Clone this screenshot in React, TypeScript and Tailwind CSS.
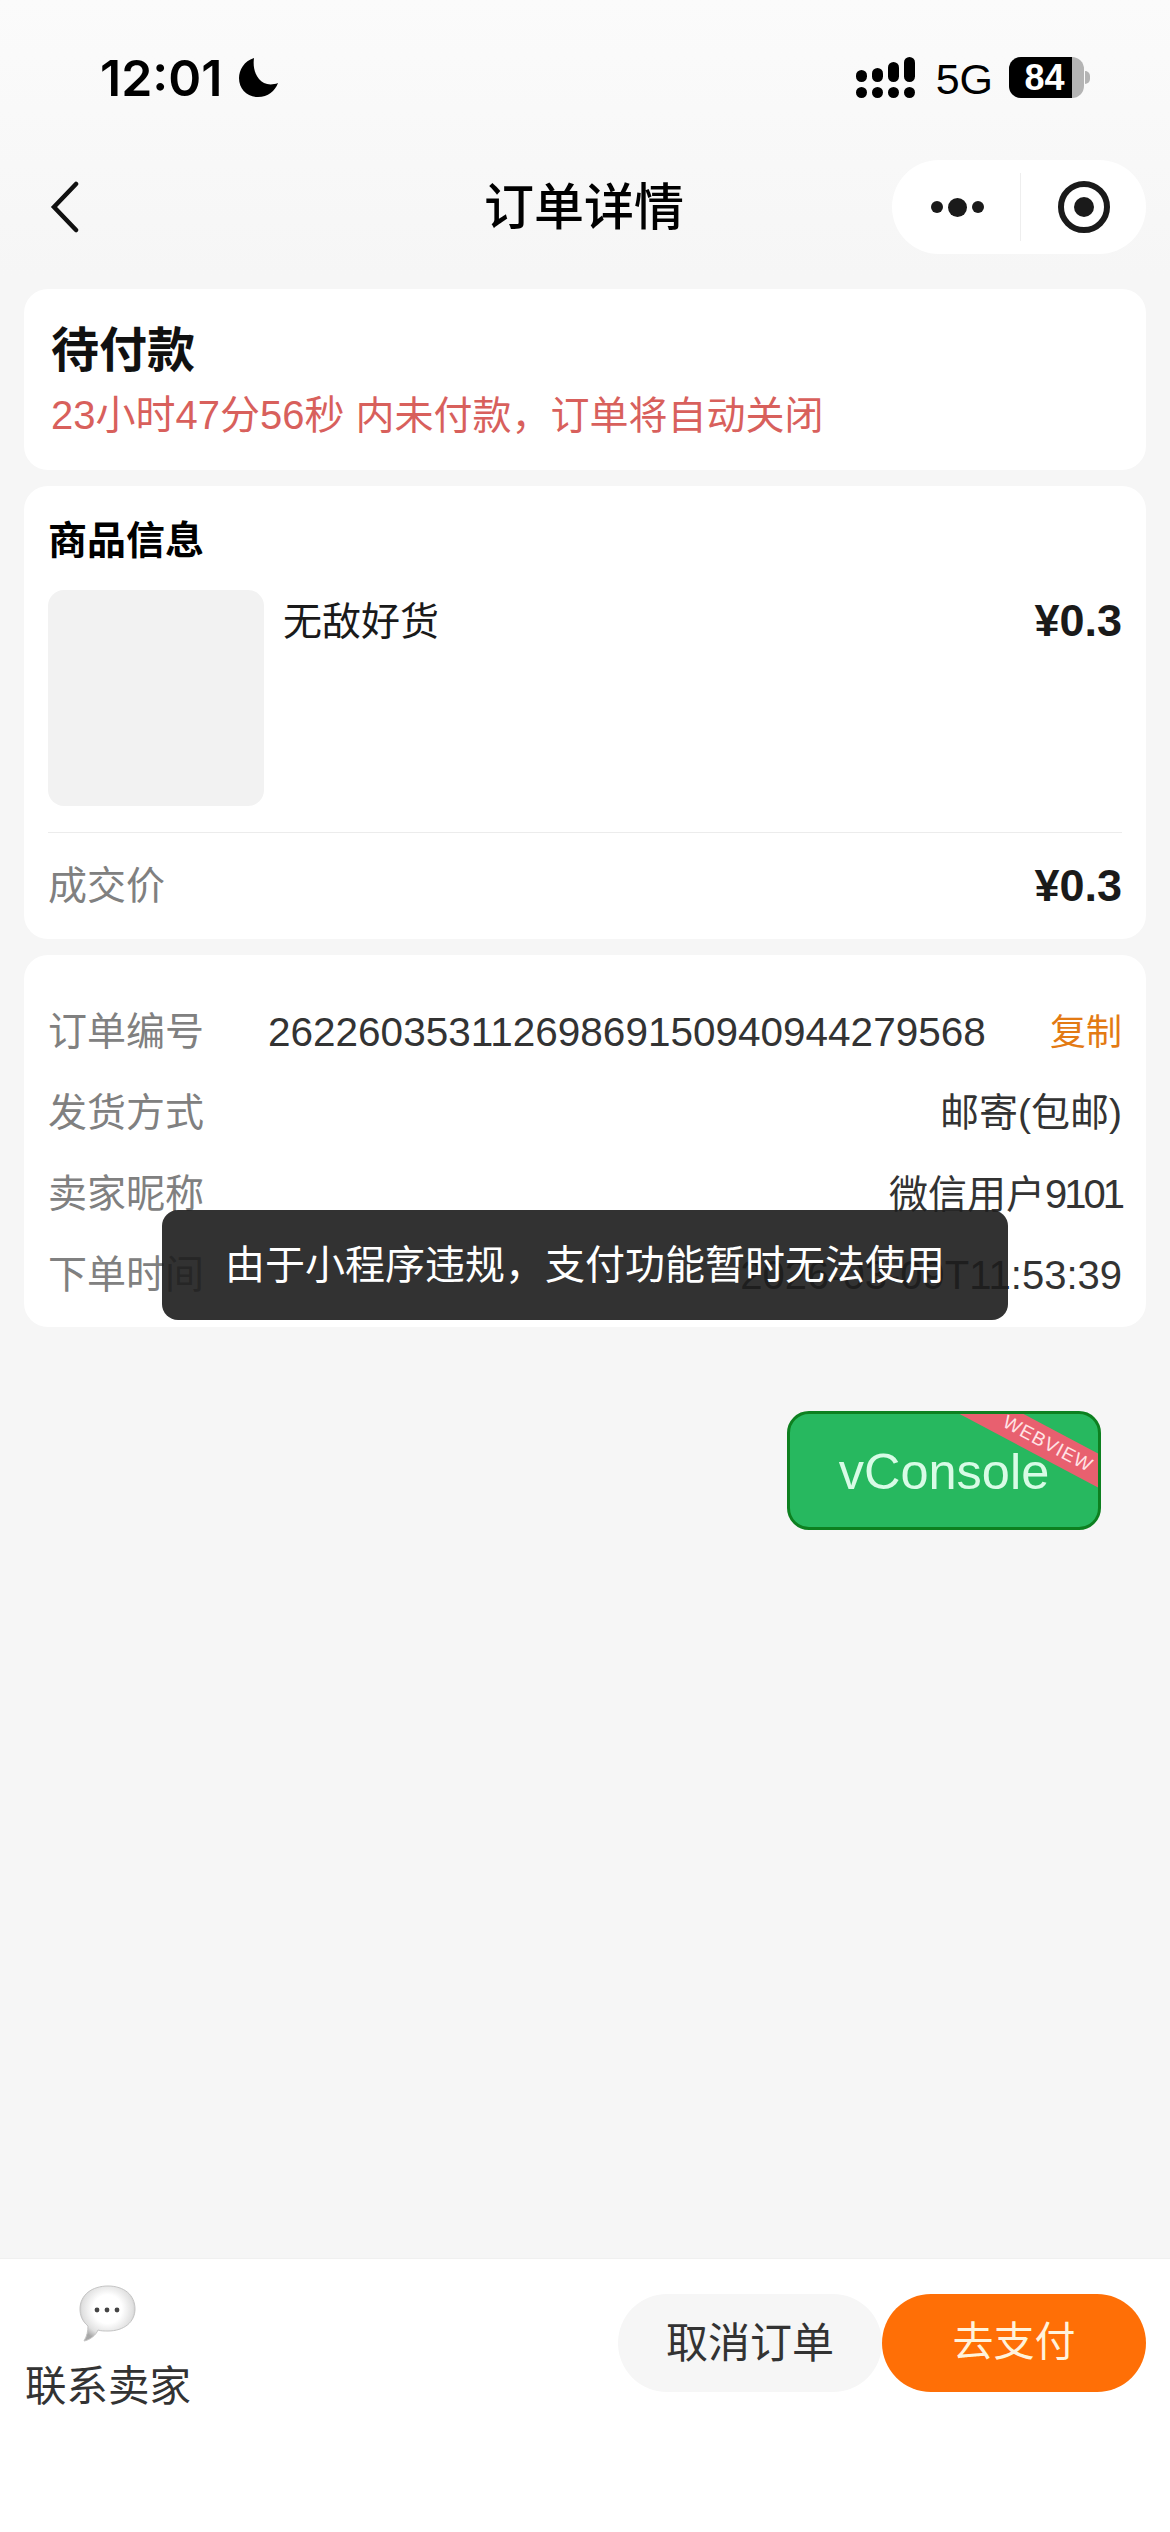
import React from "react";

const sans = "font-['Liberation_Sans','Noto_Sans_CJK_SC',sans-serif]";

function Signal() {
  const tops = ["h-[12px]", "h-[14px]", "h-[20px]", "h-[25px]"];
  return (
    <div className="flex gap-[5px] items-end">
      {tops.map((h, i) => (
        <div key={i} className="flex flex-col items-center gap-[5px] justify-end">
          <div className={`w-[11px] rounded-full bg-black ${h}`} />
          <div className="w-[11px] h-[11px] rounded-full bg-black" />
        </div>
      ))}
    </div>
  );
}

function Battery() {
  return (
    <div className="flex items-center">
      <div className="w-[75px] h-[41px] rounded-[12px] bg-[#b4b4b4] overflow-hidden">
        <div className="w-[63px] h-[41px] bg-black flex items-center justify-center text-white text-[36px] font-bold leading-none pl-[8px]">
          84
        </div>
      </div>
      <div className="w-[5px] h-[13px] rounded-r-full bg-[#b4b4b4] ml-[1px]" />
    </div>
  );
}

function Row({ label, children }: { label: string; children: React.ReactNode }) {
  return (
    <div className="h-[81px] flex items-center justify-between">
      <span className="text-[#808080] text-[39px]">{label}</span>
      <span className="text-[#333333] text-[39px]">{children}</span>
    </div>
  );
}

export default function App() {
  return (
    <div className={`relative w-[1170px] h-[2532px] bg-[#f6f6f6] flex flex-col overflow-hidden ${sans}`}>
      <header className="bg-gradient-to-b from-[#fbfbfb] to-[#f6f6f6] h-[277px] shrink-0">
        <div className="h-[160px] pt-[53px] flex justify-between pl-[100px] pr-[80px]">
          <div className="flex items-start gap-[17px]">
            <span className="font-['Inter',sans-serif] text-[50px] font-semibold leading-[50px] text-black tracking-[0px]">12:01</span>
            <svg width="39" height="39" viewBox="0 0 39 39" className="mt-[5px]">
              <path d="M15 0 C5 3 0 12 0 20 C0 31 8 39 19 39 C29 39 36 33 39 25 C31 28 24 26 20 21 C15 15 14 7 15 0 Z" fill="#000" />
            </svg>
          </div>
          <div className="flex items-start">
            <div className="mt-[4px]"><Signal /></div>
            <span className="ml-[21px] mt-[6px] text-[43px] leading-[40px] text-black">5G</span>
            <div className="ml-[16px] mt-[4px]"><Battery /></div>
          </div>
        </div>
        <div className="relative h-[94px] flex items-center justify-between pl-[44px] pr-[24px]">
          <svg width="40" height="52" viewBox="0 0 40 52" fill="none">
            <path d="M32 3 L10 26 L32 49" stroke="#111" strokeWidth="4.5" strokeLinecap="round" strokeLinejoin="miter" />
          </svg>
          <h1 className="absolute left-[484px] top-[23px] text-[50px] font-medium text-black leading-none">订单详情</h1>
          <div className="w-[254px] h-[94px] rounded-full bg-white flex items-center">
            <div className="w-[128px] flex items-center justify-center gap-[5px] pl-[2px]">
              <span className="w-[12px] h-[12px] rounded-full bg-[#1a1a1a]" />
              <span className="w-[19px] h-[19px] rounded-full bg-[#1a1a1a]" />
              <span className="w-[12px] h-[12px] rounded-full bg-[#1a1a1a]" />
            </div>
            <div className="w-px h-[68px] bg-[#eeeeee]" />
            <div className="flex-1 flex items-center justify-center">
              <div className="w-[52px] h-[52px] rounded-full border-[6px] border-[#1a1a1a] flex items-center justify-center">
                <div className="w-[20px] h-[20px] rounded-full bg-[#1a1a1a]" />
              </div>
            </div>
          </div>
        </div>
      </header>

      <main className="flex-1 pt-[12px] px-[24px] flex flex-col gap-[16px]">
        <section className="bg-white rounded-[24px] h-[181px] pl-[27px] pt-[32px]">
          <div className="text-[48px] font-bold leading-[60px] text-[#111111]">待付款</div>
          <div className="leading-[50px] mt-[9px] text-[#d8605c] text-[40px]">
            23小时47分56秒 <span className="text-[39px]">内未付款，订单将自动关闭</span>
          </div>
        </section>

        <section className="bg-white rounded-[24px] h-[453px] px-[24px] pt-[30px]">
          <div className="text-[39px] font-bold leading-[50px] text-black">商品信息</div>
          <div className="flex mt-[24px] h-[216px]">
            <div className="w-[216px] h-[216px] rounded-[16px] bg-[#f2f2f2]" />
            <div className="ml-[19px] text-[39px] leading-[50px] text-[#1a1a1a] flex-1 mt-[7px]">无敌好货</div>
            <div className="text-[45px] font-bold leading-[50px] text-[#1a1a1a] mt-[6px]">¥0.3</div>
          </div>
          <div className="h-px bg-[#ececec] mt-[26px]" />
          <div className="flex items-center justify-between h-[106px]">
            <span className="text-[39px] text-[#808080]">成交价</span>
            <span className="text-[45px] font-bold text-[#1a1a1a]">¥0.3</span>
          </div>
        </section>

        <section className="bg-white rounded-[24px] h-[372px] px-[24px] pt-[37px]">
          <div className="h-[81px] flex items-center">
            <span className="text-[#808080] text-[39px] w-[220px]">订单编号</span>
            <span className="text-[#333333] text-[40.5px] flex-1">26226035311269869150940944279568</span>
            <span className="text-[#e37a13] text-[36px]">复制</span>
          </div>
          <Row label="发货方式">邮寄(包邮)</Row>
          <Row label="卖家昵称">
            微信用户<span className="text-[40px] tracking-[-3px]">9101</span>
          </Row>
          <Row label="下单时间"><span className="text-[40px]">2026-03-09T11:53:39</span></Row>
        </section>
      </main>

      <footer className="bg-white h-[274px] shrink-0 border-t border-[#f0f0f0] flex items-start justify-between pl-[25px] pr-[24px] relative">
        <div className="flex flex-col items-center pt-[26px]">
          <svg width="60" height="58" viewBox="0 0 60 58">
            <defs>
              <radialGradient id="bub" cx="50%" cy="42%" r="58%">
                <stop offset="45%" stopColor="#ffffff" />
                <stop offset="80%" stopColor="#e0e0e0" />
                <stop offset="100%" stopColor="#a8a8a8" />
              </radialGradient>
            </defs>
            <path d="M30 1 C46 1 57 10 57 24 C57 37 46 46 30 46 C26 46 23 46 20 45 C18 50 12 55 6 56 C9 51 10 46 10 41 C4 36 2 30 2 24 C2 10 14 1 30 1 Z" fill="url(#bub)" stroke="#c4c4c4" strokeWidth="1" />
            <circle cx="19" cy="25" r="2.4" fill="#444" />
            <circle cx="29" cy="25" r="2.4" fill="#444" />
            <circle cx="39" cy="25" r="2.4" fill="#444" />
          </svg>
          <span className="text-[41.5px] leading-[50px] text-[#333333] mt-[19px]">联系卖家</span>
        </div>
        <div className="flex items-center pt-[35px]">
          <button className="w-[264px] h-[98px] rounded-full bg-[#f6f6f6] text-[42px] text-[#333333]">取消订单</button>
          <button className="w-[264px] h-[98px] rounded-full bg-[#ff6f06] text-[41px] text-[#fff3dc]">去支付</button>
        </div>
      </footer>

      <div className="absolute left-[162px] top-[1210px] w-[846px] h-[110px] rounded-[16px] bg-[#1c1c1c]/90 flex items-center justify-center text-white text-[40px]">
        由于小程序违规，支付功能暂时无法使用
      </div>

      <div className="absolute left-[787px] top-[1411px] w-[314px] h-[119px] rounded-[22px] border-[3px] border-[#0d8020] bg-[#27b85f] overflow-hidden flex items-center justify-center pt-[4px]">
        <span className="text-[50.5px] text-[#d8fbe6] leading-none">vConsole</span>
        <div className="absolute left-[158px] top-[15px] w-[200px] h-[30px] rotate-[28deg] bg-[#e8606f] flex items-center justify-center text-[19px] text-[#ffe4e6] tracking-[1px]">
          WEBVIEW
        </div>
      </div>
    </div>
  );
}
